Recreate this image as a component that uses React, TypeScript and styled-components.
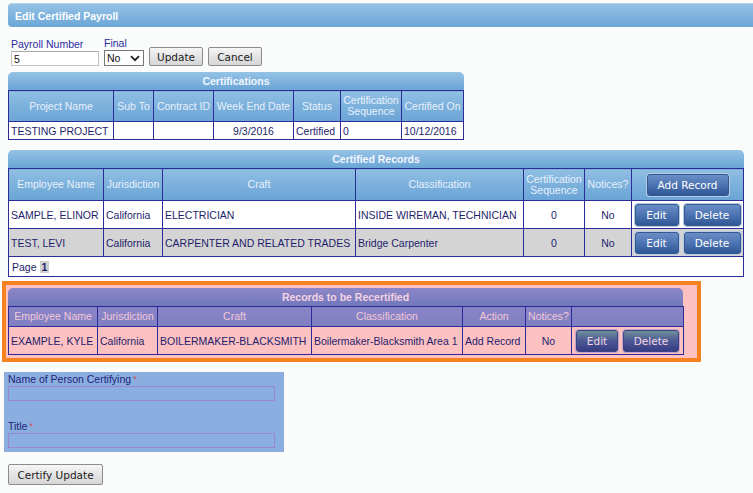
import styled, { createGlobalStyle, css } from "styled-components";

type Tone = "blue" | "purple";

const GlobalStyle = createGlobalStyle`
  html, body {
    margin: 0;
    padding: 0;
    background: #fafcfc;
  }
  body {
    font-family: "Liberation Sans", Arial, sans-serif;
    font-size: 10.5px;
    color: #1e1e6c;
    width: 753px;
    height: 493px;
    overflow: hidden;
  }
`;

const Page = styled.div`
  display: flex;
  flex-direction: column;
  align-items: flex-start;
  padding-top: 3px;
`;

const HeaderBar = styled.div`
  box-sizing: border-box;
  align-self: stretch;
  margin-left: 8px;
  height: 24px;
  padding-left: 7px;
  display: flex;
  align-items: center;
  border-radius: 4px 0 0 4px;
  background: linear-gradient(#93c1e4, #80b4de 50%, #6ca6d6);
  border-top: 1px solid #b4d4ec;
  color: #fff;
  font-weight: bold;
`;

const FormRow = styled.div`
  display: flex;
  align-items: flex-end;
  gap: 5px;
  margin: 10px 0 0 11px;
`;

const Field = styled.label`
  display: flex;
  flex-direction: column;
  gap: 1px;
  color: #2b2ba0;
  line-height: 12px;
`;

const TextInput = styled.input<{ $w: number; $tone?: Tone }>`
  box-sizing: border-box;
  width: ${(p) => p.$w}px;
  height: 15px;
  padding: 0 2px;
  font-family: "Liberation Sans", Arial, sans-serif;
  font-size: 10.5px;
  color: #111;
  outline: none;
  ${(p) =>
    p.$tone === "purple"
      ? css`
          background: #8aaee0;
          border: 1px solid #9a86cc;
        `
      : css`
          background: #fff;
          border: 1px solid #c4c4c4;
          border-top-color: #a8a8a8;
        `}
`;

const SelectBox = styled.div`
  box-sizing: border-box;
  width: 40px;
  height: 16px;
  display: flex;
  align-items: center;
  justify-content: space-between;
  padding: 0 3px 0 2px;
  border: 1px solid #777;
  background: #fff;
  select {
    appearance: none;
    border: none;
    background: transparent;
    padding: 0;
    font-family: "Liberation Sans", Arial, sans-serif;
    font-size: 10.5px;
    color: #111;
    outline: none;
  }
`;

const GrayButton = styled.button<{ $w: number; $h?: number }>`
  box-sizing: border-box;
  width: ${(p) => p.$w}px;
  height: ${(p) => p.$h ?? 19}px;
  padding: 0;
  border: 1px solid #8c8c8c;
  border-radius: 2px;
  background: linear-gradient(#f6f6f6, #e4e4e4 50%, #d6d6d6);
  font-family: "DejaVu Sans", Verdana, sans-serif;
  font-size: 10.5px;
  color: #222;
`;

const Panel = styled.section<{ $width: number; $top: number }>`
  width: ${(p) => p.$width}px;
  margin: ${(p) => p.$top}px 0 0 8px;
`;

const TitleBar = styled.div<{ $tone: Tone }>`
  height: 18px;
  line-height: 18px;
  text-align: center;
  font-weight: bold;
  border-radius: 5px 5px 0 0;
  ${(p) =>
    p.$tone === "blue"
      ? css`
          background: linear-gradient(#96c3e6, #7fb3dd 50%, #6ba5d6);
          color: #f2f6ff;
        `
      : css`
          background: linear-gradient(#8d86c8, #8080c2 50%, #7078ba);
          color: #f4d2e2;
        `}
`;

const Grid = styled.table<{ $tone: Tone }>`
  width: 100%;
  table-layout: fixed;
  border-collapse: collapse;
  border: 1px solid #5a4fb4;
  th,
  td {
    border: 1px solid #2c2c98;
    padding: 0 2px;
    overflow: hidden;
    white-space: nowrap;
  }
  th {
    font-weight: normal;
    line-height: 11px;
    ${(p) =>
      p.$tone === "blue"
        ? css`
            background: linear-gradient(#90bfe4, #7cb1dc 50%, #6aa4d6);
            color: #e8f0fc;
          `
        : css`
            background: linear-gradient(#8a84c6, #7f7fc2);
            color: #f2c8d8;
          `}
  }
`;

const Col = styled.col<{ $w: number }>`
  width: ${(p) => p.$w}px;
`;

const HeadRow = styled.tr<{ $h: number }>`
  height: ${(p) => p.$h}px;
`;

const Row = styled.tr<{ $h: number; $bg: string }>`
  height: ${(p) => p.$h}px;
  background: ${(p) => p.$bg};
`;

const Cell = styled.td<{ $align?: "left" | "center" | "right" }>`
  text-align: ${(p) => p.$align ?? "left"};
`;

const ButtonCell = styled.td`
  text-align: center;
  > div {
    display: flex;
    justify-content: center;
    gap: 5px;
  }
`;

const ActionButton = styled.button<{ $tone: Tone; $w: number }>`
  box-sizing: border-box;
  width: ${(p) => p.$w}px;
  height: 22px;
  padding: 0;
  border-radius: 3px;
  font-family: "DejaVu Sans", Verdana, sans-serif;
  font-size: 10.5px;
  ${(p) =>
    p.$tone === "blue"
      ? css`
          border: 1px solid #35598f;
          box-shadow: 0 0 0 1px #b6cbe4;
          background: linear-gradient(#6a8ec6, #4d74b2 50%, #2f5796);
          color: #fff;
        `
      : css`
          border: 1px solid #3c4386;
          box-shadow: 0 0 0 1px #c6a2c6;
          background: linear-gradient(#6f8f98, #4f5c96 45%, #363c82);
          color: #f2d6e6;
        `}
`;

const PageLabel = styled.td`
  height: 19px;
  padding: 0 3px !important;
  background: #fff;
  b {
    display: inline-block;
    margin-left: 3px;
    padding: 0 2px;
    background: #cfcfcf;
    line-height: 12px;
  }
`;

const Highlight = styled.div`
  box-sizing: border-box;
  width: 699px;
  margin: 4px 0 0 2px;
  padding: 3px 14px 3px 2px;
  border: 4px solid #f5821f;
  background: #fdc1c2;
`;

const InnerPanel = styled.section`
  width: 675px;
`;

const CertifyBox = styled.div`
  box-sizing: border-box;
  width: 280px;
  height: 80px;
  margin: 10px 0 0 4px;
  padding: 1px 4px 0;
  background: #8aaee0;
  display: flex;
  flex-direction: column;
`;

const CertifyLabel = styled.label<{ $gap?: number }>`
  color: #24247a;
  line-height: 13px;
  margin-top: ${(p) => p.$gap ?? 0}px;
  span {
    color: #d04a4a;
    font-size: 9px;
    vertical-align: top;
    margin-left: 2px;
  }
`;

const Footer = styled.div`
  margin: 12px 0 0 8px;
`;

const certColumns = [
  { label: "Project Name", w: 105 },
  { label: "Sub To", w: 40 },
  { label: "Contract ID", w: 60 },
  { label: "Week End Date", w: 80 },
  { label: "Status", w: 47 },
  { label: "Certification Sequence", w: 61 },
  { label: "Certified On", w: 62 },
];

const recordColumns = [
  { label: "Employee Name", w: 95 },
  { label: "Jurisdiction", w: 59 },
  { label: "Craft", w: 193 },
  { label: "Classification", w: 168 },
  { label: "Certification Sequence", w: 61 },
  { label: "Notices?", w: 47 },
  { label: "", w: 112 },
];

const records = [
  {
    name: "SAMPLE, ELINOR",
    jurisdiction: "California",
    craft: "ELECTRICIAN",
    classification: "INSIDE WIREMAN, TECHNICIAN",
    sequence: "0",
    notices: "No",
  },
  {
    name: "TEST, LEVI",
    jurisdiction: "California",
    craft: "CARPENTER AND RELATED TRADES",
    classification: "Bridge Carpenter",
    sequence: "0",
    notices: "No",
  },
];

const recertColumns = [
  { label: "Employee Name", w: 89 },
  { label: "Jurisdiction", w: 60 },
  { label: "Craft", w: 154 },
  { label: "Classification", w: 151 },
  { label: "Action", w: 63 },
  { label: "Notices?", w: 46 },
  { label: "", w: 112 },
];

function Chevron() {
  return (
    <svg width="10" height="7" viewBox="0 0 10 7">
      <path d="M1 1.2 L5 5.2 L9 1.2" fill="none" stroke="#222" strokeWidth="1.8" />
    </svg>
  );
}

export default function App() {
  return (
    <>
      <GlobalStyle />
      <Page>
        <HeaderBar>Edit Certified Payroll</HeaderBar>

        <FormRow>
          <Field>
            Payroll Number
            <TextInput $w={88} defaultValue="5" />
          </Field>
          <Field>
            Final
            <SelectBox>
              <select defaultValue="No">
                <option>No</option>
                <option>Yes</option>
              </select>
              <Chevron />
            </SelectBox>
          </Field>
          <GrayButton $w={54}>Update</GrayButton>
          <GrayButton $w={54}>Cancel</GrayButton>
        </FormRow>

        <Panel $width={456} $top={6}>
          <TitleBar $tone="blue">Certifications</TitleBar>
          <Grid $tone="blue">
            <colgroup>
              {certColumns.map((c) => (
                <Col key={c.label} $w={c.w} />
              ))}
            </colgroup>
            <thead>
              <HeadRow $h={31}>
                {certColumns.map((c) => (
                  <th key={c.label}>
                    {c.label === "Certification Sequence" ? (
                      <>
                        Certification
                        <br />
                        Sequence
                      </>
                    ) : (
                      c.label
                    )}
                  </th>
                ))}
              </HeadRow>
            </thead>
            <tbody>
              <Row $h={18} $bg="#fff">
                <Cell>TESTING PROJECT</Cell>
                <Cell />
                <Cell />
                <Cell $align="center">9/3/2016</Cell>
                <Cell>Certified</Cell>
                <Cell>0</Cell>
                <Cell>10/12/2016</Cell>
              </Row>
            </tbody>
          </Grid>
        </Panel>

        <Panel $width={736} $top={10}>
          <TitleBar $tone="blue">Certified Records</TitleBar>
          <Grid $tone="blue">
            <colgroup>
              {recordColumns.map((c, i) => (
                <Col key={i} $w={c.w} />
              ))}
            </colgroup>
            <thead>
              <HeadRow $h={32}>
                {recordColumns.slice(0, 6).map((c) => (
                  <th key={c.label}>
                    {c.label === "Certification Sequence" ? (
                      <>
                        Certification
                        <br />
                        Sequence
                      </>
                    ) : (
                      c.label
                    )}
                  </th>
                ))}
                <th>
                  <ActionButton $tone="blue" $w={82}>
                    Add Record
                  </ActionButton>
                </th>
              </HeadRow>
            </thead>
            <tbody>
              {records.map((r, i) => (
                <Row key={r.name} $h={28} $bg={i % 2 ? "#d4d4d4" : "#fff"}>
                  <Cell>{r.name}</Cell>
                  <Cell>{r.jurisdiction}</Cell>
                  <Cell>{r.craft}</Cell>
                  <Cell>{r.classification}</Cell>
                  <Cell $align="center">{r.sequence}</Cell>
                  <Cell $align="center">{r.notices}</Cell>
                  <ButtonCell>
                    <div>
                      <ActionButton $tone="blue" $w={44}>
                        Edit
                      </ActionButton>
                      <ActionButton $tone="blue" $w={57}>
                        Delete
                      </ActionButton>
                    </div>
                  </ButtonCell>
                </Row>
              ))}
              <tr>
                <PageLabel colSpan={7}>
                  Page<b>1</b>
                </PageLabel>
              </tr>
            </tbody>
          </Grid>
        </Panel>

        <Highlight>
          <InnerPanel>
            <TitleBar $tone="purple">Records to be Recertified</TitleBar>
            <Grid $tone="purple">
              <colgroup>
                {recertColumns.map((c, i) => (
                  <Col key={i} $w={c.w} />
                ))}
              </colgroup>
              <thead>
                <HeadRow $h={20}>
                  {recertColumns.map((c, i) => (
                    <th key={i}>{c.label}</th>
                  ))}
                </HeadRow>
              </thead>
              <tbody>
                <Row $h={28} $bg="#fdc1c2">
                  <Cell>EXAMPLE, KYLE</Cell>
                  <Cell>California</Cell>
                  <Cell>BOILERMAKER-BLACKSMITH</Cell>
                  <Cell>Boilermaker-Blacksmith Area 1</Cell>
                  <Cell>Add Record</Cell>
                  <Cell $align="center">No</Cell>
                  <ButtonCell>
                    <div>
                      <ActionButton $tone="purple" $w={42}>
                        Edit
                      </ActionButton>
                      <ActionButton $tone="purple" $w={56}>
                        Delete
                      </ActionButton>
                    </div>
                  </ButtonCell>
                </Row>
              </tbody>
            </Grid>
          </InnerPanel>
        </Highlight>

        <CertifyBox>
          <CertifyLabel>
            Name of Person Certifying<span>*</span>
          </CertifyLabel>
          <TextInput $w={267} $tone="purple" />
          <CertifyLabel $gap={19}>
            Title<span>*</span>
          </CertifyLabel>
          <TextInput $w={267} $tone="purple" />
        </CertifyBox>

        <Footer>
          <GrayButton $w={95} $h={21}>
            Certify Update
          </GrayButton>
        </Footer>
      </Page>
    </>
  );
}
